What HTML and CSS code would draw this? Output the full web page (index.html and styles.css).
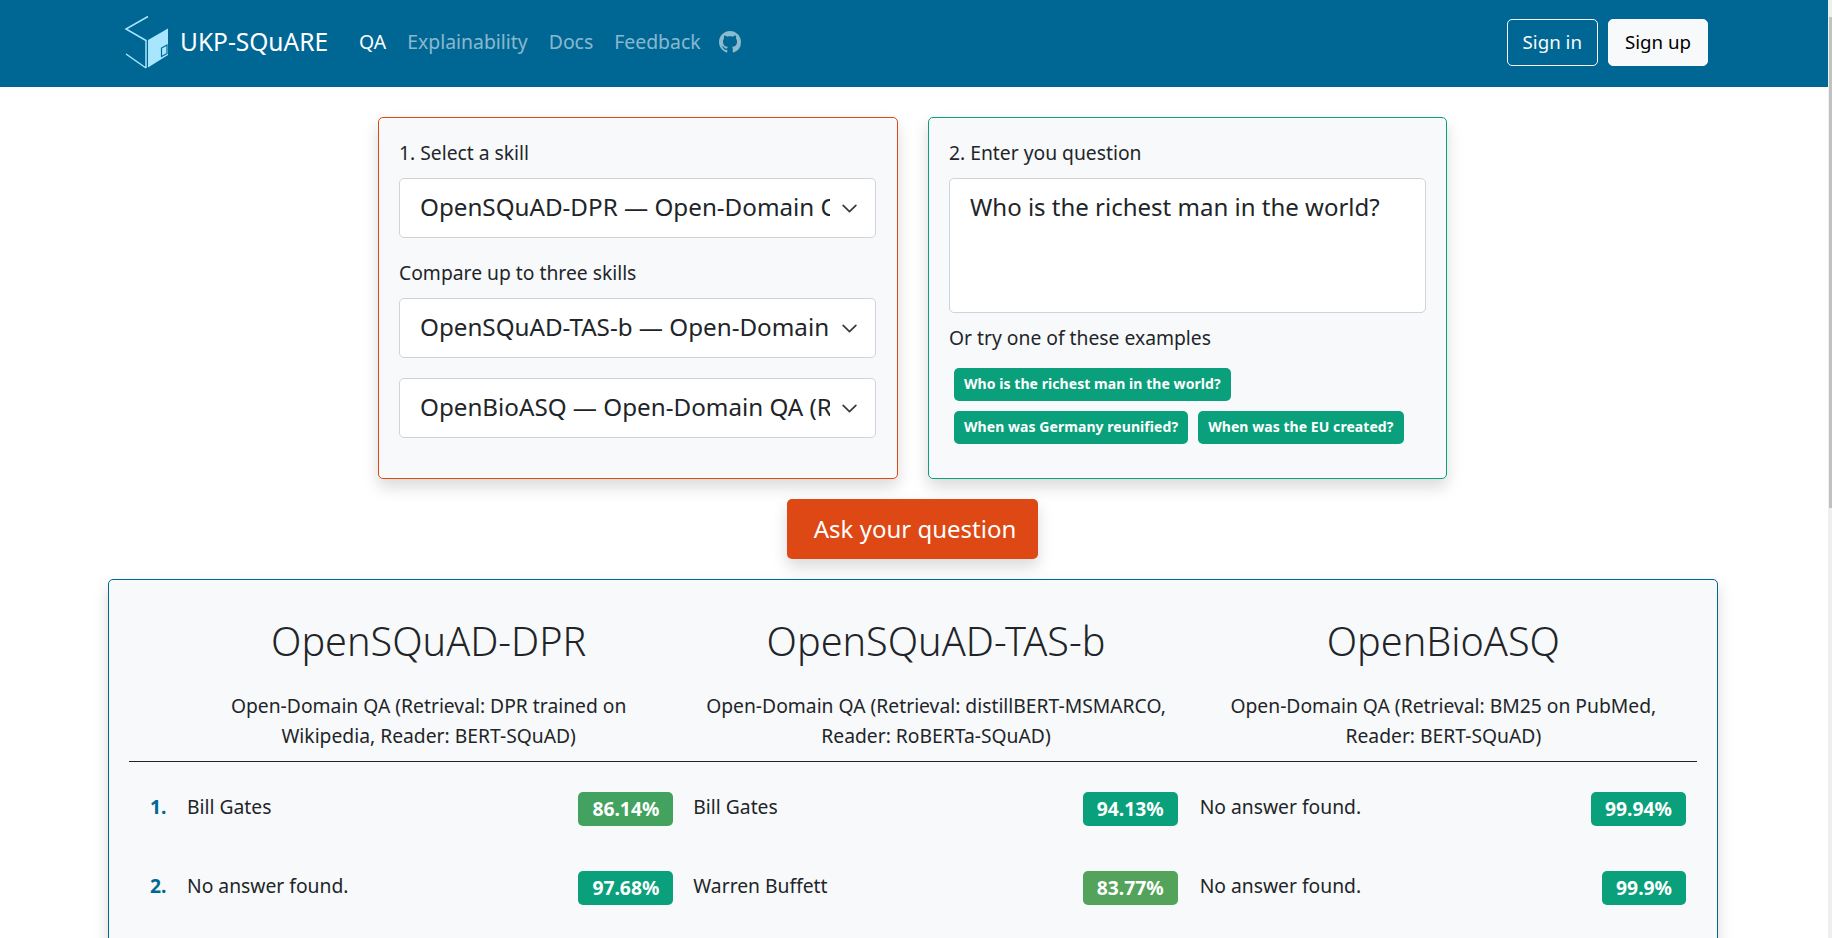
FILE: index.html
```html
<!DOCTYPE html>
<html lang="en">
<head>
    <meta charset="UTF-8">
    <title>UKP-SQuARE</title>
    <link rel="stylesheet" href="styles.css">
</head>
<body>

<nav class="navbar">
    <a class="brand" href="#">
        <svg class="brand-logo" viewBox="0 0 46 54" aria-hidden="true">
            <path class="logo-line" d="M24 1.500 2 14 22 25.500V53M2 39 22 53"/>
            <path class="logo-face" d="M24 25 44 13.500V40L24 52.500Z"/>
            <path class="logo-door" d="M37.500 33V41.500L43 38.500V30Z"/>
        </svg>
        <span>UKP-SQuARE</span>
    </a>
    <a class="nav-link active" href="#">QA</a>
    <a class="nav-link" href="#">Explainability</a>
    <a class="nav-link" href="#">Docs</a>
    <a class="nav-link" href="#">Feedback</a>
    <a class="nav-link nav-icon" href="#" aria-label="GitHub">
        <svg viewBox="0 0 16 16" width="22" height="22" fill="currentColor" aria-hidden="true">
            <path d="M8 0C3.58 0 0 3.58 0 8c0 3.54 2.29 6.53 5.47 7.59.4.07.55-.17.55-.38 0-.19-.01-.82-.01-1.49-2.01.37-2.53-.49-2.69-.94-.09-.23-.48-.94-.82-1.13-.28-.15-.68-.52-.01-.53.63-.01 1.08.58 1.23.82.72 1.21 1.87.87 2.33.66.07-.52.28-.87.51-1.07-1.78-.2-3.64-.89-3.64-3.95 0-.87.31-1.59.82-2.15-.08-.2-.36-1.02.08-2.12 0 0 .67-.21 2.2.82.64-.18 1.32-.27 2-.27.68 0 1.36.09 2 .27 1.53-1.04 2.2-.82 2.2-.82.44 1.1.16 1.92.08 2.12.51.56.82 1.27.82 2.15 0 3.07-1.87 3.75-3.65 3.95.29.25.54.73.54 1.48 0 1.07-.01 1.93-.01 2.2 0 .21.15.46.55.38A8.012 8.012 0 0 0 16 8c0-4.42-3.58-8-8-8z"/>
        </svg>
    </a>
    <div class="nav-actions">
        <a class="btn btn-outline" href="#">Sign in</a>
        <a class="btn btn-light" href="#">Sign up</a>
    </div>
</nav>

<main class="page">
    <form class="query-row">
        <section class="card card-skills">
            <label class="field-label" for="skill1">1. Select a skill</label>
            <select class="form-select" id="skill1">
                <option>OpenSQuAD-DPR — Open-Domain QA (Retrieval: DPR trained on Wikipedia, Reader: BERT-SQuAD)</option>
            </select>
            <label class="field-label" for="skill2">Compare up to three skills</label>
            <select class="form-select" id="skill2">
                <option>OpenSQuAD-TAS-b — Open-Domain QA (Retrieval: distillBERT-MSMARCO, Reader: RoBERTa-SQuAD)</option>
            </select>
            <select class="form-select" aria-label="Third skill">
                <option>OpenBioASQ — Open-Domain QA (Retrieval: BM25 on PubMed, Reader: BERT-SQuAD)</option>
            </select>
        </section>
        <section class="card card-question">
            <label class="field-label" for="question">2. Enter you question</label>
            <textarea class="question-input" id="question">Who is the richest man in the world?</textarea>
            <div class="examples-label">Or try one of these examples</div>
            <div class="examples">
                <a class="badge" href="#">Who is the richest man in the world?</a>
                <a class="badge" href="#">When was Germany reunified?</a>
                <a class="badge" href="#">When was the EU created?</a>
            </div>
        </section>
    </form>

    <div class="ask-row">
        <button class="btn-ask" type="button">Ask your question</button>
    </div>

    <section class="card card-results">
        <div class="results-grid results-head">
            <div class="skill-head">
                <h2>OpenSQuAD-DPR</h2>
                <p>Open-Domain QA (Retrieval: DPR trained on Wikipedia, Reader: BERT-SQuAD)</p>
            </div>
            <div class="skill-head">
                <h2>OpenSQuAD-TAS-b</h2>
                <p>Open-Domain QA (Retrieval: distillBERT-MSMARCO, Reader: RoBERTa-SQuAD)</p>
            </div>
            <div class="skill-head">
                <h2>OpenBioASQ</h2>
                <p>Open-Domain QA (Retrieval: BM25 on PubMed, Reader: BERT-SQuAD)</p>
            </div>
        </div>
        <div class="results-grid result-row">
            <div class="rank">1.</div>
            <div class="answer"><span>Bill Gates</span><span class="score score-mid">86.14%</span></div>
            <div class="answer"><span>Bill Gates</span><span class="score">94.13%</span></div>
            <div class="answer"><span>No answer found.</span><span class="score">99.94%</span></div>
        </div>
        <div class="results-grid result-row">
            <div class="rank">2.</div>
            <div class="answer"><span>No answer found.</span><span class="score">97.68%</span></div>
            <div class="answer"><span>Warren Buffett</span><span class="score score-low">83.77%</span></div>
            <div class="answer"><span>No answer found.</span><span class="score">99.9%</span></div>
        </div>
    </section>
</main>

<div class="scroll-track"><div class="scroll-thumb"></div></div>

</body>
</html>
```

FILE: styles.css
```css
* {
    box-sizing: border-box;
}

body {
    margin: 0;
    padding-right: 4px;
    font-family: "Noto Sans", sans-serif;
    font-size: 19.3px;
    color: #212529;
    background-color: #fff;
}

a {
    text-decoration: none;
}

.navbar {
    display: flex;
    align-items: center;
    height: 87px;
    padding: 0 120px 2px 124px;
    background-color: #006795;
}

.brand {
    display: flex;
    align-items: center;
    color: #fff;
    font-size: 24.500px;
    margin-right: 31px;
    line-height: 28px;
    padding-bottom: 2px;
}

.brand-logo {
    width: 46px;
    height: 54px;
    margin-right: 10px;
}

.logo-line {
    fill: none;
    stroke: #a8e6ff;
    stroke-width: 1.5;
}

.logo-face {
    fill: #a8e6ff;
}

.logo-door {
    fill: #a8e6ff;
    stroke: #006795;
    stroke-width: 1.2;
}

.nav-link {
    color: rgba(255, 255, 255, 0.55);
    font-size: 19.400px;
    line-height: 26px;
    margin-right: 21px;
    padding-bottom: 2px;
}

.nav-link.active {
    color: #fff;
}

.nav-icon {
    display: flex;
    margin-left: -3px;
}

.nav-actions {
    display: flex;
    gap: 10px;
    margin-left: auto;
}

.btn {
    display: block;
    height: 47px;
    line-height: 44px;
    padding: 0 15px;
    border: 1px solid #f8f9fa;
    border-radius: 5px;
    font-size: 18.700px;
}

.btn-outline {
    color: #f8f9fa;
}

.btn-light {
    padding: 0 16px;
    color: #000;
    background-color: #f8f9fa;
}

.page {
    padding: 30px 111px 30px 108px;
}

.query-row {
    display: flex;
    justify-content: center;
    gap: 30px;
}

.card {
    background-color: #f8f9fa;
    border: 1px solid #ccc;
    border-radius: 5px;
    padding: 20px;
    box-shadow: 0 8px 16px rgba(0, 0, 0, 0.15);
}

.card-skills {
    width: 520px;
    height: 362px;
    padding-right: 21px;
    border-color: #dd4814;
}

.card-question {
    width: 519px;
    height: 362px;
    border-color: #0aa07b;
}

.field-label {
    display: block;
    line-height: 30px;
    margin-bottom: 10px;
}

.form-select {
    display: block;
    width: 100%;
    height: 60px;
    margin-bottom: 20px;
    padding: 0 45px 3px 20px;
    appearance: none;
    font-family: inherit;
    font-size: 24.200px;
    color: #212529;
    background-color: #fff;
    background-image: url("data:image/svg+xml,%3csvg xmlns='http://www.w3.org/2000/svg' viewBox='0 0 16 16'%3e%3cpath fill='none' stroke='%23343a40' stroke-linecap='round' stroke-linejoin='round' stroke-width='1.6' d='M2 5l6 6 6-6'/%3e%3c/svg%3e");
    background-repeat: no-repeat;
    background-position: right 17px center;
    background-size: 17px 17px;
    border: 1px solid #ced4da;
    border-radius: 5px;
}

.question-input {
    display: block;
    width: 100%;
    height: 135px;
    padding: 10px 20px;
    resize: none;
    font-family: inherit;
    font-size: 24px;
    line-height: 36px;
    color: #212529;
    background-color: #fff;
    border: 1px solid #ced4da;
    border-radius: 5px;
}

.examples-label {
    line-height: 30px;
    margin: 10px 0 15px;
}

.examples {
    display: flex;
    flex-wrap: wrap;
    gap: 10px;
    padding-left: 5px;
}

.badge {
    display: block;
    height: 33px;
    line-height: 32px;
    padding: 0 10px;
    border-radius: 5px;
    font-size: 14px;
    font-weight: 700;
    letter-spacing: 0.06px;
    color: #fff;
    background-color: #0aa07b;
}

.ask-row {
    display: flex;
    justify-content: center;
    margin: 20px 0 21px;
}

.btn-ask {
    width: 251px;
    height: 60px;
    padding: 0 0 2px 5px;
    border: none;
    border-radius: 5px;
    font-family: inherit;
    font-size: 24px;
    color: #fff;
    background-color: #dd4814;
    box-shadow: 0 8px 16px rgba(0, 0, 0, 0.15);
}

.card-results {
    min-height: 1120px;
    margin-right: -1px;
    margin-top: -1px;
    border-color: #006795;
}

.results-grid {
    display: grid;
    grid-template-columns: 46px repeat(3, 1fr);
}

.results-head {
    border-bottom: 1px solid #212529;
    padding-top: 17px;
    height: 162px;
}

.skill-head {
    text-align: center;
    padding: 0 12px;
}

.skill-head:first-child {
    grid-column: 2;
}

.skill-head h2 {
    margin: 0 0 26px;
    font-size: 39.600px;
    line-height: 48px;
    font-weight: 300;
}

.skill-head p {
    margin: 0;
    line-height: 30px;
}

.result-row {
    margin-top: 30px;
    margin-bottom: 45px;
}

.rank {
    padding-left: 21px;
    font-weight: 700;
    line-height: 29px;
    color: #006795;
}

.answer {
    display: flex;
    justify-content: space-between;
    align-items: flex-start;
    padding: 0 9px 0 12px;
    line-height: 29px;
}

.answer + .answer {
    padding: 0 12px 0 11px;
}

.answer:last-child {
    padding: 0 11px 0 10px;
}

.result-row + .result-row {
    margin-top: 0;
}

.score {
    height: 34px;
    line-height: 34px;
    padding: 0 14px;
    border-radius: 5px;
    font-weight: 700;
    color: #fff;
    background-color: #0aa07b;
}

.score-mid {
    background-color: #43a260;
}

.score-low {
    background-color: #53a35a;
}

.scroll-track {
    position: fixed;
    top: 0;
    right: 0;
    bottom: 0;
    width: 4px;
    padding-top: 17px;
    background-color: #efefef;
}

.scroll-thumb {
    height: 491px;
    margin-left: 1px;
    background-color: #c1c1c1;
}
```
